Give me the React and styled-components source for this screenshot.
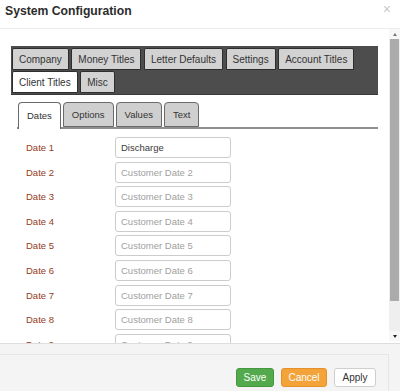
import React from "react";
import styled, { createGlobalStyle } from "styled-components";

const GlobalStyle = createGlobalStyle`
  body {
    margin: 0;
    background: #fff;
    font-family: "Liberation Sans", Arial, sans-serif;
  }
`;

const Dialog = styled.div`
  width: 400px;
  height: 391px;
  display: flex;
  flex-direction: column;
  background: #fff;
  overflow: hidden;
`;

const Header = styled.div`
  height: 29px;
  flex: none;
  display: flex;
  justify-content: space-between;
  align-items: flex-start;
  padding: 2px 9px 0 5px;
  box-sizing: border-box;
  border-bottom: 1px solid #ececec;
`;

const Title = styled.h1`
  margin: 0;
  font-size: 12.2px;
  font-weight: bold;
  color: #2b2b2b;
  line-height: 18px;
`;

const Close = styled.span`
  color: #c9c9c9;
  font-size: 14px;
  line-height: 14px;
`;

const Body = styled.div`
  flex: 1;
  display: flex;
  min-height: 0;
`;

const Content = styled.div`
  flex: 1;
  padding: 17px 11px 0 11px;
  overflow: hidden;
`;

const Scrollbar = styled.div`
  width: 11px;
  flex: none;
  display: flex;
  flex-direction: column;
  background: #efefef;
  margin-bottom: 2px;
`;

const ScrollArrow = styled.div`
  height: 10px;
  flex: none;
  display: flex;
  align-items: center;
  justify-content: center;
  background: #f7f7f7;
  &::after {
    content: "";
    border-left: 2.5px solid transparent;
    border-right: 2.5px solid transparent;
    ${(p) =>
      p.$down
        ? "border-top: 3px solid #222;"
        : "border-bottom: 3px solid #777;"}
  }
`;

const Thumb = styled.div`
  height: 262px;
  background: #ababab;
  margin: 0 1px 0 1px;
`;

const Track = styled.div`
  flex: 1;
`;

const TabPanel = styled.div`
  background: #4d4d4d;
  display: flex;
  flex-wrap: wrap;
  column-gap: 2.5px;
  row-gap: 1px;
  padding: 2px 0 1px 1px;
  border-bottom: 1px solid #3a3a3a;
`;

const Tab = styled.div`
  height: 22px;
  box-sizing: border-box;
  padding: 0 6px;
  display: flex;
  align-items: center;
  font-size: 10px;
  color: #333;
  background: ${(p) => (p.$active ? "#fff" : "#d2d2d2")};
  border: 1px solid #2e2e2e;
  border-radius: 2px 2px 0 0;
`;

const Section = styled.div`
  margin: 7px 0 0 6px;
`;

const SubTabs = styled.div`
  display: flex;
  gap: 2px;
  padding-left: 1px;
  border-bottom: 2px solid #8e8e8e;
  height: 25px;
  align-items: flex-end;
`;

const SubTab = styled.div`
  height: ${(p) => (p.$active ? "27px" : "25px")};
  box-sizing: border-box;
  padding: ${(p) => (p.$active ? "0 8px 2px" : "0 8px")};
  display: flex;
  align-items: center;
  font-size: 9.5px;
  color: #333;
  background: ${(p) => (p.$active ? "#fff" : "#cfcfcf")};
  border: 1px solid #6a6a6a;
  border-bottom: ${(p) => (p.$active ? "none" : "1px solid #6a6a6a")};
  border-radius: 4px 4px 0 0;
  margin-bottom: ${(p) => (p.$active ? "-2px" : "0")};
  position: relative;
`;

const Fields = styled.div`
  display: flex;
  flex-direction: column;
  gap: 3.6px;
  padding: 8px 0 0 9px;
`;

const Row = styled.div`
  display: grid;
  grid-template-columns: 89px 116px;
  align-items: center;
`;

const Label = styled.span`
  font-size: 9.5px;
  color: #943b1c;
`;

const Input = styled.input`
  height: 21px;
  box-sizing: border-box;
  border: 1px solid #cccccc;
  border-radius: 3px;
  padding: 0 5px;
  font-family: "Liberation Sans", Arial, sans-serif;
  font-size: 9.5px;
  color: #3a3a3a;
  background: #fff;
  outline: none;
  &::placeholder {
    color: #a0a0a0;
  }
`;

const Footer = styled.div`
  height: 48px;
  flex: none;
  box-sizing: border-box;
  background: #f4f4f4;
  border-top: 1px solid #dedede;
  padding-top: 10px;
`;

const ButtonBar = styled.div`
  height: 100%;
  box-sizing: border-box;
  margin-right: 11px;
  border-top: 1px solid #e6e6e6;
  border-right: 1px solid #e6e6e6;
  display: flex;
  justify-content: flex-end;
  align-items: flex-start;
  gap: 7px;
  padding: 13px 12px 0 0;
`;

const variants = {
  save: { bg: "#52aa4c", border: "#439a3e", color: "#fff" },
  cancel: { bg: "#f3a33a", border: "#e4912a", color: "#fff" },
  apply: { bg: "#fff", border: "#cfcfcf", color: "#333" },
};

const Button = styled.button`
  height: 19px;
  box-sizing: border-box;
  padding: 0;
  width: ${(p) => p.$w}px;
  font-family: "Liberation Sans", Arial, sans-serif;
  font-size: 10px;
  border-radius: 3px;
  background: ${(p) => variants[p.$kind].bg};
  border: 1px solid ${(p) => variants[p.$kind].border};
  color: ${(p) => variants[p.$kind].color};
`;

const mainTabs = [
  "Company",
  "Money Titles",
  "Letter Defaults",
  "Settings",
  "Account Titles",
  "Client Titles",
  "Misc",
];
const subTabs = ["Dates", "Options", "Values", "Text"];
const dates = [1, 2, 3, 4, 5, 6, 7, 8, 9];

export default function App() {
  return (
    <>
      <GlobalStyle />
      <Dialog>
        <Header>
          <Title>System Configuration</Title>
          <Close>×</Close>
        </Header>
        <Body>
          <Content>
            <TabPanel>
              {mainTabs.map((t) => (
                <Tab key={t} $active={t === "Client Titles"}>
                  {t}
                </Tab>
              ))}
            </TabPanel>
            <Section>
              <SubTabs>
                {subTabs.map((t) => (
                  <SubTab key={t} $active={t === "Dates"}>
                    {t}
                  </SubTab>
                ))}
              </SubTabs>
              <Fields>
                {dates.map((n) => (
                  <Row key={n}>
                    <Label>Date {n}</Label>
                    {n === 1 ? (
                      <Input defaultValue="Discharge" />
                    ) : (
                      <Input placeholder={`Customer Date ${n}`} />
                    )}
                  </Row>
                ))}
              </Fields>
            </Section>
          </Content>
          <Scrollbar>
            <ScrollArrow />
            <Thumb />
            <Track />
            <ScrollArrow $down />
          </Scrollbar>
        </Body>
        <Footer>
          <ButtonBar>
            <Button $kind="save" $w={38}>Save</Button>
            <Button $kind="cancel" $w={46}>Cancel</Button>
            <Button $kind="apply" $w={42}>Apply</Button>
          </ButtonBar>
        </Footer>
      </Dialog>
    </>
  );
}
